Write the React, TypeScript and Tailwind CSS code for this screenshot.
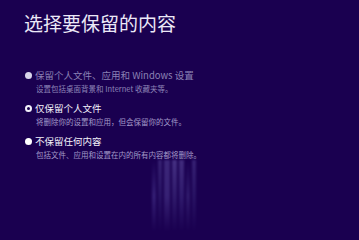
const font = {
  fontFamily: '"Noto Sans CJK SC", "Noto Sans", sans-serif',
};

interface OptionProps {
  label: string;
  desc: string;
  kind: "disabled" | "selected" | "normal";
}

function Option({ label, desc, kind }: OptionProps) {
  const dim = kind === "disabled";
  return (
    <div className="flex flex-col">
      <div className="flex items-center h-[12px]">
        <span className="w-[10px] flex items-center justify-center mr-[1px]">
          {kind === "selected" ? (
            <span className="w-[7px] h-[7px] rounded-full border-[2px] border-[#f2f0fa]" />
          ) : (
            <span
              className={`w-[7px] h-[7px] rounded-full ${dim ? "bg-[#d8d4ea]" : "bg-white"}`}
            />
          )}
        </span>
        <span
          className={`text-[9.5px] leading-[12px] ml-[1px] ${dim ? "text-[#8a80b4]" : "text-[#f4f2fb]"}`}
        >
          {label}
        </span>
      </div>
      <p
        className={`text-[7.5px] leading-[10px] pl-[13px] mt-[3px] ${dim ? "text-[#8f86b8]" : "text-[#a39ac9]"}`}
      >
        {desc}
      </p>
    </div>
  );
}

export default function App() {
  return (
    <div
      className="relative w-[359px] h-[240px] bg-[#1a0050] overflow-hidden"
      style={font}
    >
      <div className="pl-[24px] pt-[9px]">
        <h1 className="text-[19px] leading-[28px] text-[#ece8f7] font-normal">
          选择要保留的内容
        </h1>
      </div>
      <div className="flex flex-col gap-[8px] pl-[23px] pt-[32px]">
        <Option
          kind="disabled"
          label="保留个人文件、应用和 Windows 设置"
          desc="设置包括桌面背景和 Internet 收藏夹等。"
        />
        <Option
          kind="selected"
          label="仅保留个人文件"
          desc="将删除你的设置和应用，但会保留你的文件。"
        />
        <Option
          kind="normal"
          label="不保留任何内容"
          desc="包括文件、应用和设置在内的所有内容都将删除。"
        />
      </div>

      {/* hover glow streaks */}
      <div className="absolute left-[152px] top-[160px] w-[44px] h-[72px] flex gap-[2px] opacity-45 blur-[1px]">
        <div className="w-[5px] h-full bg-gradient-to-b from-transparent via-[#5444a0] to-transparent" />
        <div className="w-[5px] h-full bg-gradient-to-b from-[#5a4a9c] via-[#3a2a7c] to-transparent" />
        <div className="w-[7px] h-full bg-gradient-to-b from-[#6656aa] via-[#5a4aa0] to-transparent" />
        <div className="w-[5px] h-full bg-gradient-to-b from-[#7a6ac0] via-[#4a3a8c] to-transparent" />
        <div className="w-[6px] h-full bg-gradient-to-b from-[#7060b4] via-[#4a3a90] to-transparent" />
        <div className="w-[5px] h-full bg-gradient-to-b from-transparent via-[#4a3a8c] to-transparent" />
        <div className="w-[5px] h-full bg-gradient-to-b from-[#5a4aa0] via-[#3a2a7c] to-transparent" />
      </div>
    </div>
  );
}
